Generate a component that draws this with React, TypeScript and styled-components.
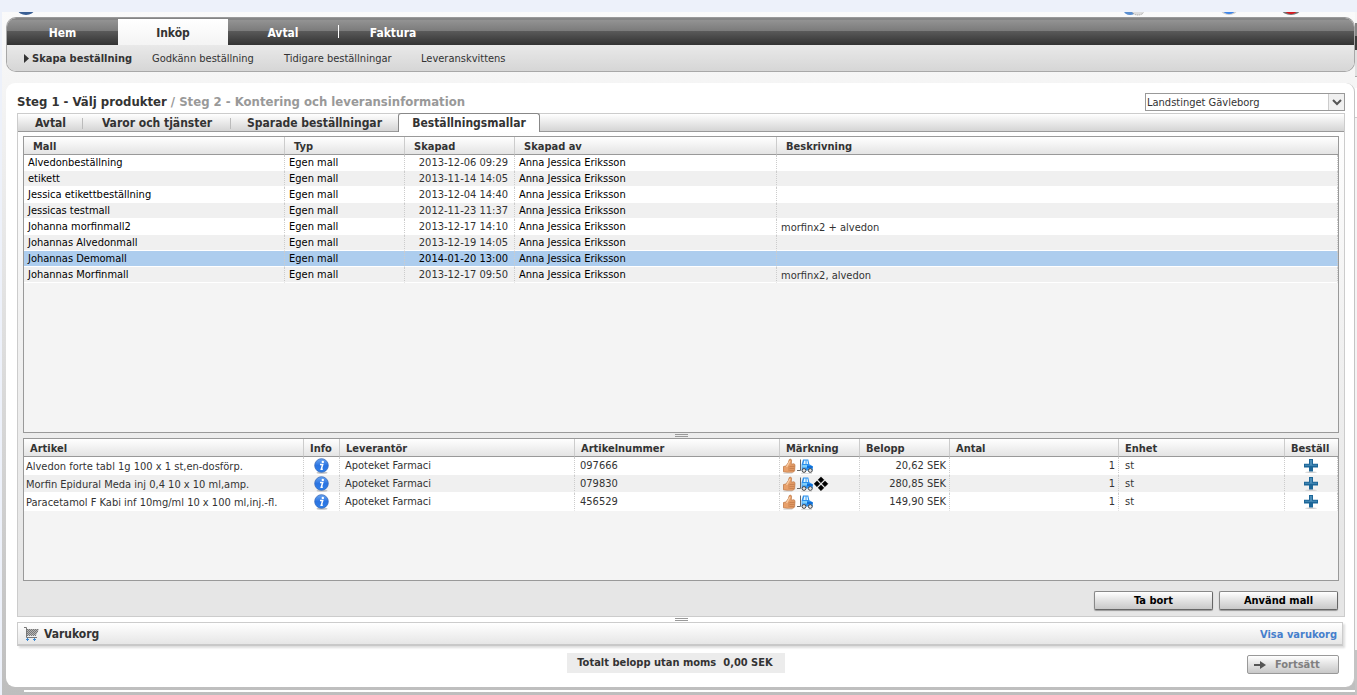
import React from "react";
import styled, { createGlobalStyle, css } from "styled-components";

const Global = createGlobalStyle`
  *, *::before, *::after { box-sizing: border-box; }
  body { margin: 0; background: #edf1fa; }
  body, button, select { font-family: "DejaVu Sans Condensed", "DejaVu Sans", sans-serif; font-size: 11px; color: #333; }
`;

const Shell = styled.div`
  display: flex;
  min-height: 100vh;
  padding: 12px 0 0 2px;
`;

const Page = styled.div`
  flex: 1;
  min-width: 0;
  display: flex;
  flex-direction: column;
  padding: 0 0 0 4px;
  background: linear-gradient(#fafafa, #f4f4f4 12%, #bebebe);
`;

const TopIcons = styled.div`
  height: 5px;
  display: flex;
  justify-content: space-between;
  padding: 0 55px 0 12px;
  overflow: hidden;
`;

const TopRight = styled.div`
  display: flex;
  gap: 45px;
  > :first-child { margin-right: 32px; }
`;

const Edge = styled.div`
  width: 2px;
  display: flex;
  flex-direction: column;
  background: #c4c4c4;
`;

const EdgePart = styled.div<{ $h: number; $bg: string }>`
  height: ${(p) => p.$h}px;
  background: ${(p) => p.$bg};
`;

const Nav = styled.nav`
  border: 1px solid #a8a8a8;
  border-top-color: #999;
  border-radius: 10px;
  overflow: hidden;
`;

const MainNav = styled.div`
  display: flex;
  height: 27px;
  padding-top: 1px;
  background: linear-gradient(#858585 0 2px, #939393 2px, #7b7b7b 13px, #5a5a5a 13px, #333 27px);
`;

const MainLink = styled.a<{ $active?: boolean; $divider?: boolean }>`
  width: 110px;
  display: flex;
  align-items: center;
  justify-content: center;
  position: relative;
  padding-top: 2px;
  font-size: 12px;
  font-weight: bold;
  text-decoration: none;
  color: #fff;
  &:first-child { width: 111px; }
  ${(p) => p.$active && css`color: #333; background: linear-gradient(#fff, #f4f4f4);`}
  ${(p) => p.$divider && css`
    &::after { content: ""; position: absolute; right: -1px; top: 6px; width: 1px; height: 13px; background: #fff; }
  `}
`;

const SubNav = styled.div`
  display: grid;
  grid-template-columns: 128px 132px 137px auto;
  align-items: center;
  height: 26px;
  padding-left: 17px;
  background: linear-gradient(#e9e9e9, #d6d6d6);
`;

const SubLink = styled.a<{ $active?: boolean }>`
  display: flex;
  align-items: center;
  gap: 3px;
  color: #333;
  text-decoration: none;
  white-space: nowrap;
  font-weight: ${(p) => (p.$active ? "bold" : "normal")};
`;

const Card = styled.main`
  flex: 1;
  display: flex;
  flex-direction: column;
  margin-top: 11px;
  padding: 9px 9px 13px 11px;
  background: #fff;
  border-right: 1px solid #c4c4c4;
  border-radius: 9px;
`;

const Heading = styled.header`
  display: flex;
  justify-content: space-between;
  align-items: flex-start;
  height: 21px;
`;

const Steps = styled.h1`
  margin: 0;
  font-size: 13px;
  line-height: 20px;
  color: #333;
  span { color: #999; }
`;

const Picker = styled.span`
  position: relative;
  width: 200px;
  height: 18px;
  margin-top: 1px;
  svg { position: absolute; right: 1px; top: 1px; pointer-events: none; }
`;

const Select = styled.select`
  appearance: none;
  display: block;
  width: 100%;
  height: 18px;
  padding: 0 20px 0 1px;
  border: 1px solid #999;
  border-radius: 0;
  background: #fff;
`;

const Panel = styled.section`
  flex: 1;
  display: flex;
  flex-direction: column;
  border: 1px solid #ccc;
  background: linear-gradient(#fff, #f2f2f2 40%, #e6e6e6 90%);
`;

const Tabs = styled.div`
  display: flex;
  height: 18px;
  border-bottom: 1px solid #999;
  background: linear-gradient(#fff, #d4d4d4);
`;

const Tab = styled.button<{ $w: number; $active?: boolean }>`
  width: ${(p) => p.$w}px;
  height: 17px;
  padding: 1px 0 0;
  border: 0;
  background: none;
  font-size: 12px;
  line-height: 16px;
  font-weight: bold;
  white-space: nowrap;
  position: relative;
  &:not(:last-child)::after {
    content: ""; position: absolute; right: 0; top: 4px; width: 1px; height: 11px; background: #bbb;
  }
  &:nth-last-child(2)::after { display: none; }
  ${(p) => p.$active && css`
    height: 19px;
    margin-top: -1px;
    padding: 0;
    border: 1px solid #888;
    border-bottom: 0;
    border-radius: 3px 3px 0 0;
    background: #fff;
  `}
`;

const Content = styled.div`
  flex: 1;
  display: flex;
  flex-direction: column;
  padding: 4px 5px 6px;
`;

const GridBox = styled.div<{ $grow?: boolean }>`
  border: 1px solid #999;
  background: #f4f4f4;
  ${(p) => (p.$grow ? css`flex: 1;` : css`min-height: 143px;`)}
`;

const Table = styled.table<{ $row: number; $head: number }>`
  width: 100%;
  table-layout: fixed;
  border-spacing: 0;
  th {
    height: 18px;
    padding: 2px 0 0 ${(p) => p.$head}px;
    text-align: left;
    line-height: 15px;
    border-right: 1px solid #ccc;
    border-bottom: 1px solid #999;
    background: linear-gradient(#fff, #e4e4e4);
    white-space: nowrap;
  }
  th:last-child { border-right: 0; }
  td { height: ${(p) => p.$row}px; }
`;

const Row = styled.tr<{ $selected?: boolean }>`
  background: #fff;
  &:nth-child(even) { background: #f0f0f0; }
  ${(p) => p.$selected && css`&&& { background: #adcdee; color: #000; }`}
`;

const Cell = styled.td<{ $align?: string; $pad?: number; $drop?: number; $dark?: boolean }>`
  padding: ${(p) => p.$drop || 0}px ${(p) => (p.$align === "right" ? p.$pad ?? 3 : 0)}px 0
    ${(p) => (p.$align ? 0 : p.$pad ?? 4)}px;
  line-height: 12px;
  text-align: ${(p) => p.$align || "left"};
  border-right: 1px dotted #ccc;
  border-bottom: 1px solid #fff;
  white-space: nowrap;
  color: ${(p) => (p.$dark ? "#000" : "inherit")};
  svg { display: block; }
`;

const Marks = styled.span`
  display: flex;
`;

const IconButton = styled.button`
  display: block;
  width: 16px;
  height: 16px;
  margin: 0 auto;
  padding: 0;
  border: 0;
  background: none;
`;

const Handle = styled.div<{ $h: number }>`
  height: ${(p) => p.$h}px;
  display: flex;
  justify-content: center;
  align-items: center;
  &::before {
    content: "";
    width: 13px;
    height: 3px;
    border: solid #999;
    border-width: 1px 0;
  }
`;

const Actions = styled.div`
  display: flex;
  justify-content: flex-end;
  gap: 6px;
  padding: 10px 1px 0 0;
`;

const PushButton = styled.button`
  width: 119px;
  height: 19px;
  padding: 0;
  border: 1px solid #888;
  border-right-color: #666;
  border-bottom-color: #666;
  border-radius: 2px;
  box-shadow: 0 1px 1px #999;
  background: linear-gradient(#fff, #e2e2e2 50%, #c8c8c8);
  color: #000;
  font-weight: bold;
  line-height: 16px;
`;

const NextButton = styled(PushButton)`
  display: flex;
  align-items: center;
  gap: 9px;
  width: 92px;
  padding-left: 6px;
  border-color: #999;
  box-shadow: none;
  color: #808080;
`;

const CartBar = styled.section`
  display: flex;
  align-items: center;
  height: 24px;
  margin-right: 2px;
  padding: 1px 5px 0 6px;
  border: 1px solid #ccc;
  border-bottom: 2px solid #c8c8c8;
  background: linear-gradient(#fff, #e6e6e6);
  box-shadow: 2px 2px 2px #ddd;
  h2 { flex: 1; margin: 0 0 0 4px; font-size: 12px; line-height: 16px; }
  a { font-weight: bold; color: #467fcc; text-decoration: none; }
`;

const Footer = styled.footer`
  display: grid;
  grid-template-columns: 1fr auto 1fr;
  align-items: end;
  padding: 7px 6px 0 0;
  > :last-child { justify-self: end; }
`;

const Total = styled.p`
  display: flex;
  gap: 7px;
  margin: 0 4px 1px 0;
  padding: 0 12px 0 10px;
  line-height: 20px;
  font-weight: bold;
  background: #ececec;
`;

const Bottom = styled.div`
  height: 8px;
  padding: 3px 0 0 18px;
  &::before { content: ""; display: block; height: 2px; background: #fff; }
`;

const InfoIcon = () => (
  <svg width="16" height="16" viewBox="0 0 16 16" aria-hidden="true">
    <defs>
      <linearGradient id="info" x2="0" y2="1"><stop stopColor="#6aa6f2" /><stop offset=".5" stopColor="#2b74e2" /><stop offset="1" stopColor="#2f7fe8" /></linearGradient>
    </defs>
    <ellipse cx="8" cy="14.8" rx="5.5" ry="1" fill="#c4c4c4" />
    <circle cx="7.500" cy="7.500" r="6.8" fill="url(#info)" stroke="#3568ba" strokeWidth=".8" />
    <circle cx="8.800" cy="3.900" r="1.2" fill="#fff" />
    <path d="M6 6.500h2.700L7.300 11.300h1.500" fill="none" stroke="#fff" strokeWidth="1.5" />
  </svg>
);

const ThumbIcon = () => (
  <svg width="15" height="16" viewBox="0 0 15 16" aria-hidden="true">
    <path d="M1.500 8.500 4 8 6.400 4.500 7.300 1.500Q9 .3 9.500 2.200L9.200 6.200 12 5.800Q13.300 6.300 12.900 8L12.600 12.800Q12 14.300 10 14.300H5L1.500 13.800Z" fill="#e8a06a" stroke="#c07a48" strokeWidth=".8" />
    <path d="M7.500 8.300h5M7.500 10.300h4.900M7.500 12.300h4.700" stroke="#b56d3c" strokeWidth=".7" />
    <path d="M6.900 8.200V13" stroke="#c98450" strokeWidth=".7" />
    <path d="M4.600 9 8 3" stroke="#f8cda6" strokeWidth="1.300" />
    <path d="M1.400 15.200h9" stroke="#c8c8c8" strokeWidth=".8" />
  </svg>
);

const ForkliftIcon = () => (
  <svg width="17" height="16" viewBox="0 0 17 16" aria-hidden="true">
    <path d="M3.500 1.500V12.500H0" stroke="#666" fill="none" />
    <path d="M4.600 12.500V6.500L6 1.500H11.300L12.300 6.300 15.800 8.300V12.500Z" fill="#2b90ee" />
    <path d="M6.400 6 7.200 2.500H8.600V6Z M9.500 2.500H10.500L11.200 6H9.500Z" fill="#e6f8ff" />
    <path d="M5.300 7H10V9.500H5.300Z" fill="#7fd0fc" />
    <path d="M10 8h5.500v2H10Z" fill="#0f6fd8" />
    <g fill="#e4e4e4" stroke="#444" strokeWidth="1"><circle cx="7" cy="12.500" r="1.900" /><circle cx="13.300" cy="12.500" r="1.900" /></g>
    <path d="M4 15.400h11" stroke="#ccc" strokeWidth=".7" />
  </svg>
);

const DiamondsIcon = () => (
  <svg width="15" height="16" viewBox="0 0 15 16" aria-hidden="true">
    <path d="M7 .9l2.900 2.900L7 6.700 4.100 3.800ZM3 4.900l2.900 2.900L3 10.700.1 7.800ZM11 4.900l2.900 2.900L11 10.700 8.100 7.800ZM7 8.900l2.900 2.900L7 14.700 4.100 11.800Z" fill="#000" stroke="#000" strokeWidth=".5" />
  </svg>
);

const PlusIcon = () => (
  <svg width="16" height="16" viewBox="0 0 16 16" aria-hidden="true">
    <ellipse cx="8" cy="14.300" rx="6" ry=".8" fill="#d0d0d0" />
    <path d="M6 1h4v4.800H15v3.700H10V13.500H6V9.500H1V5.800H6Z" fill="#1c6698" />
    <path d="M7 2h2v4.800H14v1H2v-1H7Z" fill="#4a8db8" />
  </svg>
);

const CartIcon = () => (
  <svg width="16" height="15" viewBox="0 0 16 15" aria-hidden="true">
    <path d="M0 .5h2.500V10.500H13" fill="none" stroke="#777" />
    <path d="M3 2h12l-3 6.500H3Z" fill="#b4b4b4" />
    <path d="M3 2.500h12M3 4.500h11M3 6.500h10M3 8.500h9" stroke="#777" strokeDasharray="1 1" />
    <path d="M4 3.500h10M4 5.500h9M4 7.500h8" stroke="#777" strokeDasharray="1 1" />
    <path d="M2 12.500h3M3.500 11v3M9 12.500h3M10.500 11v3" stroke="#3d87cc" />
  </svg>
);

const templates = [
  ["Alvedonbeställning", "2013-12-06 09:29", ""],
  ["etikett", "2013-11-14 14:05", ""],
  ["Jessica etikettbeställning", "2013-12-04 14:40", ""],
  ["Jessicas testmall", "2012-11-23 11:37", ""],
  ["Johanna morfinmall2", "2013-12-17 14:10", "morfinx2 + alvedon"],
  ["Johannas Alvedonmall", "2013-12-19 14:05", ""],
  ["Johannas Demomall", "2014-01-20 13:00", ""],
  ["Johannas Morfinmall", "2013-12-17 09:50", "morfinx2, alvedon"],
];

const articles = [
  ["Alvedon forte tabl 1g 100 x 1 st,en-dosförp.", "097666", "20,62 SEK"],
  ["Morfin Epidural Meda inj 0,4 10 x 10 ml,amp.", "079830", "280,85 SEK"],
  ["Paracetamol F Kabi inf 10mg/ml 10 x 100 ml,inj.-fl.", "456529", "149,90 SEK"],
];

const Columns = ({ widths }: { widths: (number | undefined)[] }) => (
  <colgroup>
    {widths.map((w, i) => <col key={i} width={w} />)}
  </colgroup>
);

export default function App() {
  return (
    <>
      <Global />
      <Shell>
        <Page>
          <TopIcons>
            <svg width="16" height="4" aria-hidden="true"><ellipse cx="8" cy="-2" rx="8" ry="5" fill="#3a5f94" /></svg>
            <TopRight>
              <svg width="20" height="4" aria-hidden="true"><ellipse cx="6" cy="-1" rx="6" ry="4" fill="#5b8fd0" /><ellipse cx="14" cy="-1" rx="6" ry="4" fill="#ddd" stroke="#999" strokeDasharray="1 1" /></svg>
              <svg width="16" height="4" aria-hidden="true"><ellipse cx="8" cy="-2" rx="8" ry="5" fill="#ccc" /><ellipse cx="8" cy="-2" rx="6" ry="4" fill="#3f86ea" /></svg>
              <svg width="18" height="4" aria-hidden="true"><ellipse cx="9" cy="-2" rx="9" ry="5" fill="#777" /><ellipse cx="9" cy="-2" rx="6" ry="4" fill="#d8191f" /></svg>
            </TopRight>
          </TopIcons>
          <Nav>
            <MainNav>
              <MainLink href="#hem">Hem</MainLink>
              <MainLink href="#inkop" $active>Inköp</MainLink>
              <MainLink href="#avtal" $divider>Avtal</MainLink>
              <MainLink href="#faktura">Faktura</MainLink>
            </MainNav>
            <SubNav>
              <SubLink href="#skapa" $active>
                <svg width="5" height="9" aria-hidden="true"><path d="M0 0l5 4.500-5 4.500Z" fill="#333" /></svg>
                Skapa beställning
              </SubLink>
              <SubLink href="#godkann">Godkänn beställning</SubLink>
              <SubLink href="#tidigare">Tidigare beställningar</SubLink>
              <SubLink href="#leverans">Leveranskvittens</SubLink>
            </SubNav>
          </Nav>
          <Card>
            <Heading>
              <Steps>Steg 1 - Välj produkter <span>/ Steg 2 - Kontering och leveransinformation</span></Steps>
              <Picker>
                <Select aria-label="Organisation"><option>Landstinget Gävleborg</option></Select>
                <svg width="16" height="16" aria-hidden="true">
                  <path d="M0 0h16v16H0Z" fill="#f0f0f0" /><path d="M.5 0v16" stroke="#ccc" />
                  <path d="M5 6l4 4 4-4" fill="none" stroke="#555" strokeWidth="2" />
                </svg>
              </Picker>
            </Heading>
            <Panel>
              <Tabs>
                <Tab $w={65}>Avtal</Tab>
                <Tab $w={148}>Varor och tjänster</Tab>
                <Tab $w={167}>Sparade beställningar</Tab>
                <Tab $w={142} $active>Beställningsmallar</Tab>
              </Tabs>
              <Content>
                <GridBox $grow>
                  <Table $row={16} $head={9}>
                    <Columns widths={[261, 120, 110, 262, undefined]} />
                    <thead>
                      <tr><th>Mall</th><th>Typ</th><th>Skapad</th><th>Skapad av</th><th>Beskrivning</th></tr>
                    </thead>
                    <tbody>
                      {templates.map(([name, date, note], i) => (
                        <Row key={name} $selected={i === 6}>
                          <Cell $dark>{name}</Cell>
                          <Cell $dark>Egen mall</Cell>
                          <Cell $align="right" $pad={6}>{date}</Cell>
                          <Cell $dark>Anna Jessica Eriksson</Cell>
                          <Cell $drop={3}>{note}</Cell>
                        </Row>
                      ))}
                    </tbody>
                  </Table>
                </GridBox>
                <Handle $h={5} />
                <GridBox>
                  <Table $row={18} $head={6}>
                    <Columns widths={[280, 36, 235, 205, 80, 90, 169, 166, undefined]} />
                    <thead>
                      <tr>
                        <th>Artikel</th><th>Info</th><th>Leverantör</th><th>Artikelnummer</th><th>Märkning</th>
                        <th>Belopp</th><th>Antal</th><th>Enhet</th><th>Beställ</th>
                      </tr>
                    </thead>
                    <tbody>
                      {articles.map(([name, no, sum], i) => (
                        <Row key={no}>
                          <Cell $pad={2} $drop={2}>{name}</Cell>
                          <Cell $align="center"><IconButton aria-label="Info"><InfoIcon /></IconButton></Cell>
                          <Cell $pad={5}>Apoteket Farmaci</Cell>
                          <Cell $pad={5}>{no}</Cell>
                          <Cell $pad={2}><Marks><ThumbIcon /><ForkliftIcon />{i === 1 && <DiamondsIcon />}</Marks></Cell>
                          <Cell $align="right">{sum}</Cell>
                          <Cell $align="right">1</Cell>
                          <Cell $pad={6}>st</Cell>
                          <Cell $align="center"><IconButton aria-label="Beställ"><PlusIcon /></IconButton></Cell>
                        </Row>
                      ))}
                    </tbody>
                  </Table>
                </GridBox>
                <Actions>
                  <PushButton>Ta bort</PushButton>
                  <PushButton>Använd mall</PushButton>
                </Actions>
              </Content>
            </Panel>
            <Handle $h={5} />
            <CartBar>
              <CartIcon />
              <h2>Varukorg</h2>
              <a href="#varukorg">Visa varukorg</a>
            </CartBar>
            <Footer>
              <span />
              <Total><span>Totalt belopp utan moms</span><span>0,00 SEK</span></Total>
              <NextButton>
                <svg width="12" height="10" aria-hidden="true"><path d="M0 4h6V1l6 4-6 4V6H0Z" fill="#555" /></svg>
                Fortsätt
              </NextButton>
            </Footer>
          </Card>
          <Bottom />
        </Page>
        <Edge>
          <EdgePart $h={11} $bg="#f6f6f6" />
          <EdgePart $h={13} $bg="#858585" />
          <EdgePart $h={14} $bg="#3c3c3c" />
          <EdgePart $h={26} $bg="#e0e0e0" />
          <EdgePart $h={1} $bg="#aaa" />
          <EdgePart $h={11} $bg="#f6f6f6" />
          <EdgePart $h={29} $bg="#fff" />
          <EdgePart $h={1} $bg="#ccc" />
          <EdgePart $h={532} $bg="#f4f4f4" />
        </Edge>
      </Shell>
    </>
  );
}
